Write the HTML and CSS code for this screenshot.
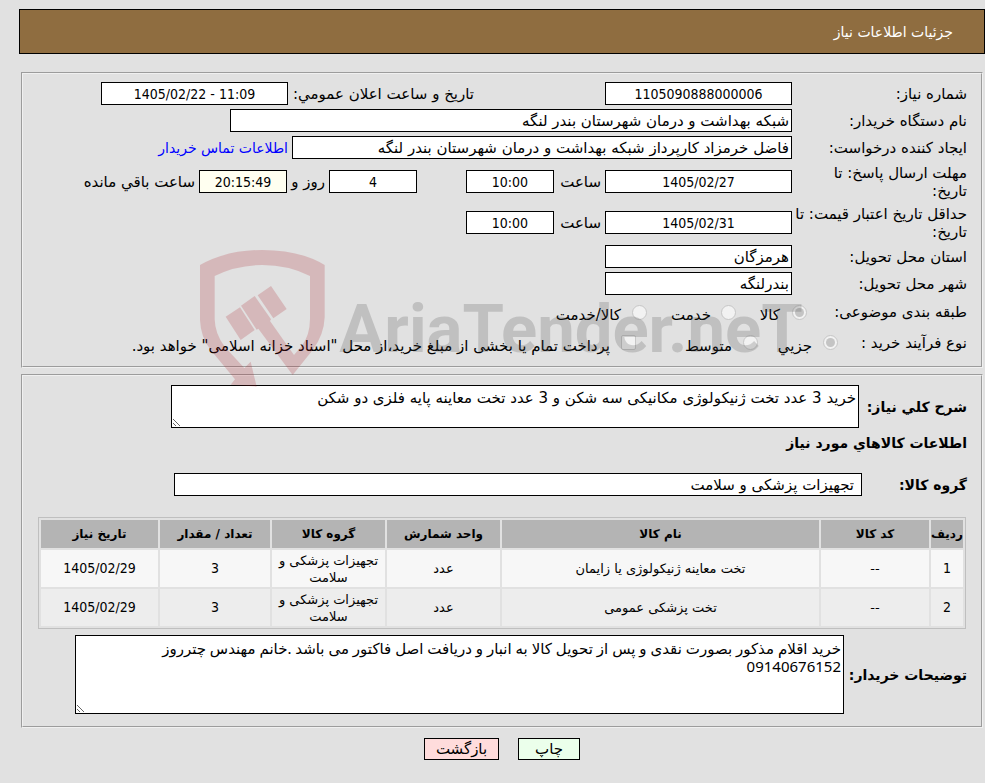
FILE: index.html
```html
<!DOCTYPE html>
<html lang="fa" dir="rtl">
<head>
  <meta charset="UTF-8">
  <meta name="viewport" content="width=device-width, initial-scale=1.0">
  <title>جزئیات اطلاعات نیاز</title>
  <link rel="stylesheet" href="styles.css">
</head>
<body>
  <header>
    <h1>جزئیات اطلاعات نیاز</h1>
  </header>

  <main>
    <section class="panel info">
      <div class="row">
        <label class="title" for="needNo">شماره نیاز:</label>
        <input class="box medium center" id="needNo" type="text" value="1105090888000006" readonly>
        <label class="announce" for="announceDate">تاریخ و ساعت اعلان عمومي:</label>
        <input class="box medium center" id="announceDate" type="text" dir="ltr" value="1405/02/22 - 11:09" readonly>
      </div>
      <div class="row">
        <label class="title" for="buyerOrg">نام دستگاه خریدار:</label>
        <input class="box wide" id="buyerOrg" type="text" value="شبکه بهداشت و درمان شهرستان بندر لنگه" readonly>
      </div>
      <div class="row">
        <label class="title" for="creator">ایجاد کننده درخواست:</label>
        <input class="box creator" id="creator" type="text" value="فاضل خرمزاد کارپرداز شبکه بهداشت و درمان شهرستان بندر لنگه" readonly>
        <a class="contact" href="#">اطلاعات تماس خریدار</a>
      </div>
      <div class="row tall">
        <label class="title" for="replyDate">مهلت ارسال پاسخ: تا<br>تاریخ:</label>
        <input class="box medium center" id="replyDate" type="text" value="1405/02/27" readonly>
        <label class="hour" for="replyHour">ساعت</label>
        <input class="box small center" id="replyHour" type="text" value="10:00" readonly>
        <input class="box small center days" id="days" type="text" value="4" readonly>
        <label class="day" for="days">روز و</label>
        <input class="box small center timer" id="timer" type="text" value="20:15:49" readonly>
        <label class="left-time" for="timer">ساعت باقي مانده</label>
      </div>
      <div class="row tall">
        <label class="title" for="priceDate">حداقل تاریخ اعتبار قیمت: تا<br>تاریخ:</label>
        <input class="box medium center" id="priceDate" type="text" value="1405/02/31" readonly>
        <label class="hour" for="priceHour">ساعت</label>
        <input class="box small center" id="priceHour" type="text" value="10:00" readonly>
      </div>
      <div class="row">
        <label class="title" for="province">استان محل تحویل:</label>
        <input class="box medium" id="province" type="text" value="هرمزگان" readonly>
      </div>
      <div class="row">
        <label class="title" for="city">شهر محل تحویل:</label>
        <input class="box medium" id="city" type="text" value="بندرلنگه" readonly>
      </div>
      <div class="row options">
        <span class="title subject">طبقه بندی موضوعی:</span>
        <input type="radio" name="subject" id="goods" checked disabled>
        <label class="opt-goods" for="goods">کالا</label>
        <input type="radio" name="subject" id="service" disabled>
        <label class="opt-service" for="service">خدمت</label>
        <input type="radio" name="subject" id="both" disabled>
        <label for="both">کالا/خدمت</label>
      </div>
      <div class="row options process">
        <span class="title process-title">نوع فرآیند خرید :</span>
        <input type="radio" name="process" id="minor" checked disabled>
        <label class="opt-minor" for="minor">جزیي</label>
        <input type="radio" name="process" id="middle" disabled>
        <label class="opt-middle" for="middle">متوسط</label>
        <input type="checkbox" id="treasury" disabled>
        <label class="opt-treasury" for="treasury">پرداخت تمام یا بخشی از مبلغ خرید،از محل "اسناد خزانه اسلامی" خواهد بود.</label>
      </div>
    </section>

    <section class="panel goods">
      <div class="row">
        <label class="strong summary-title" for="summary">شرح کلي نیاز:</label>
        <textarea class="box summary" id="summary" readonly>خرید 3 عدد تخت ژنیکولوژی مکانیکی سه شکن و 3 عدد تخت معاینه پایه فلزی دو شکن</textarea>
      </div>
      <h2>اطلاعات کالاهاي مورد نیاز</h2>
      <div class="row">
        <label class="strong group-title" for="group">گروه کالا:</label>
        <input class="box group" id="group" type="text" value="تجهیزات پزشکی و سلامت" readonly>
      </div>

      <table>
        <colgroup>
          <col class="c-row"><col class="c-code"><col class="c-name"><col class="c-unit"><col class="c-group"><col class="c-count"><col class="c-date">
        </colgroup>
        <thead>
          <tr>
            <th>ردیف</th>
            <th>کد کالا</th>
            <th>نام کالا</th>
            <th>واحد شمارش</th>
            <th>گروه کالا</th>
            <th>تعداد / مقدار</th>
            <th>تاریخ نیاز</th>
          </tr>
        </thead>
        <tbody>
          <tr>
            <td class="num">1</td>
            <td>--</td>
            <td>تخت معاینه ژنیکولوژی یا زایمان</td>
            <td>عدد</td>
            <td>تجهیزات پزشکی و<br>سلامت</td>
            <td class="num">3</td>
            <td class="num">1405/02/29</td>
          </tr>
          <tr>
            <td class="num">2</td>
            <td>--</td>
            <td>تخت پزشکی عمومی</td>
            <td>عدد</td>
            <td>تجهیزات پزشکی و<br>سلامت</td>
            <td class="num">3</td>
            <td class="num">1405/02/29</td>
          </tr>
        </tbody>
      </table>

      <div class="row">
        <label class="strong notes-title" for="notes">توضیحات خریدار:</label>
        <textarea class="box notes" id="notes" readonly>خرید اقلام مذکور بصورت نقدی و پس از تحویل کالا به انبار و دریافت اصل فاکتور می باشد .خانم مهندس چترروز
09140676152</textarea>
      </div>
    </section>

    <svg class="watermark" viewBox="6 0 1860 480" direction="ltr" aria-hidden="true">
      <g fill="#aa1923">
        <path d="M30 75Q110 30 217 30Q330 30 404 75V232Q402 285 368 330L308 405L205 266L200 269L153 197L194 168L243 238L240 243L312 345L335 318Q360 285 360 236V108Q295 75 217 75Q140 75 74 108V238Q75 282 104 320L163 384L182 365L200 440L122 434L135 418L62 330Q32 292 30 240Z"/>
        <path d="M107 230L150 202L194 270L152 300ZM203 166L243 138L290 207L250 235Z"/>
      </g>
      <text x="448" y="336">AriaTender.neT</text>
    </svg>
  </main>

  <div class="actions">
    <button class="print" type="button">چاپ</button>
    <button class="back" type="button">بازگشت</button>
  </div>
</body>
</html>
```

FILE: styles.css
```css
* {
  box-sizing: border-box;
}

body {
  margin: 0;
  padding: 9px 0 16px 19px;
  background-color: #e1e1e1;
  color: #000;
  font-family: 'DejaVu Sans', sans-serif;
  font-size: 15px;
  line-height: 18px;
}

header {
  display: flex;
  align-items: center;
  height: 45px;
  padding: 0 31px;
  background-color: #8f6d40;
  border: 1px solid #000;
  color: #fff;
}

header h1 {
  margin: 0;
  font-size: 14px;
  font-weight: normal;
}

main {
  position: relative;
  margin-top: 18px;
  padding: 0 2px;
}

.panel {
  border: 2px groove #f0f0f0;
  padding: 6px 14px 8px;
}

.goods {
  margin-top: 6px;
  padding: 9px 14px 12px;
}

.row {
  display: flex;
  align-items: center;
  min-height: 27px;
  white-space: nowrap;
}

.tall {
  min-height: 41px;
}

.title {
  flex: 0 0 175px;
}

.box {
  flex: none;
  height: 23px;
  padding: 0 2px;
  margin: 0;
  background-color: #fff;
  border: 1px solid #000;
  border-radius: 0;
  color: #000;
  font: inherit;
}

.center {
  font-family: 'DejaVu Sans Condensed', 'DejaVu Sans', sans-serif;
  font-size: 14px;
  text-align: center;
}

.small {
  width: 88px;
}

.medium {
  width: 187px;
}

.wide {
  width: 562px;
}

.creator {
  width: 500px;
}

.announce {
  flex: 0 0 186px;
  margin-right: 131px;
}

.contact {
  margin-right: 4px;
  color: #00f;
  font-size: 14px;
  text-decoration: none;
}

.hour {
  flex: 0 0 47px;
  margin-right: 4px;
}

.days {
  margin-right: 49px;
}

.day {
  flex: 0 0 38px;
  margin-right: 4px;
}

.timer {
  background-color: #fffff0;
}

.left-time {
  margin-right: 4px;
}

.options {
  min-height: 30px;
}

.options input {
  display: grid;
  place-items: center;
  flex: none;
  width: 15px;
  height: 15px;
  margin: 0;
  appearance: none;
  background-color: #f2f2f2;
  border: 1px solid #c6c6c6;
  border-radius: 2px;
}

.options input[type="radio"] {
  border-radius: 50%;
}

.options input:checked::before {
  content: '';
  width: 9px;
  height: 9px;
  border-radius: 50%;
  background-color: #c4c4c4;
}

.options label {
  padding-top: 6px;
}

.subject {
  flex-basis: 160px;
}

.process {
  min-height: 31px;
}

.process-title {
  flex-basis: 129px;
}

.opt-goods {
  flex: 0 0 44px;
  margin-right: 12px;
}

.opt-service {
  flex: 0 0 64px;
  margin-right: 10px;
}

.opt-service + input + label,
.opt-treasury {
  margin-right: 11px;
}

.opt-minor {
  flex: 0 0 54px;
  margin-right: 11px;
}

.opt-middle {
  flex: 0 0 96px;
  margin-right: 11px;
}

.strong,
h2 {
  font-size: 14px;
  font-weight: bold;
}

h2 {
  margin: 6px 0 19px;
}

textarea.box {
  padding: 3px 2px;
  resize: both;
  overflow: auto;
}

.summary-title {
  flex: 0 0 108px;
}

textarea.summary {
  width: 688px;
  height: 43px;
}

.group-title {
  flex: 0 0 105px;
}

.group {
  width: 688px;
  padding: 0 7px;
}

table {
  width: calc(100% - 2px);
  margin: 19px 1px 6px;
  table-layout: fixed;
  border: 1px solid #bfbfbf;
  border-spacing: 2px;
  font-size: 13px;
  line-height: 17px;
  text-align: center;
}

th,
td {
  height: 37px;
  padding: 0;
}

th {
  height: 28px;
  background-color: #b4b4b4;
  font-size: 12px;
  white-space: nowrap;
}

td {
  background-color: #f7f7f7;
}

tbody tr:nth-child(2) td {
  background-color: #ededed;
}

.num {
  font-family: 'DejaVu Sans Condensed', 'DejaVu Sans', sans-serif;
  font-size: 14px;
}

.c-row {
  width: 32px;
}

.c-code {
  width: 108px;
}

.c-unit,
.c-group {
  width: 113px;
}

.c-count {
  width: 110px;
}

.c-date {
  width: 117px;
}

.notes-title {
  flex: 0 0 123px;
}

textarea.notes {
  width: 769px;
  height: 79px;
  font-family: 'Noto Sans', 'DejaVu Sans', sans-serif;
}

.watermark {
  position: absolute;
  top: 168px;
  left: 0;
  right: 0;
  width: 620px;
  height: 160px;
  margin: 0 auto;
  opacity: 0.2;
  pointer-events: none;
}

.watermark text {
  fill: #404040;
  font-family: Roboto, sans-serif;
  font-size: 201px;
  font-weight: bold;
}

.actions {
  display: flex;
  justify-content: center;
  gap: 19px;
  margin-top: 10px;
}

button {
  height: 22px;
  padding: 0;
  border: 1px solid #000;
  color: #000;
  font: inherit;
  cursor: pointer;
}

.print {
  width: 62px;
  background-color: #ebffeb;
}

.back {
  width: 75px;
  background-color: #ffdcdc;
}
```
